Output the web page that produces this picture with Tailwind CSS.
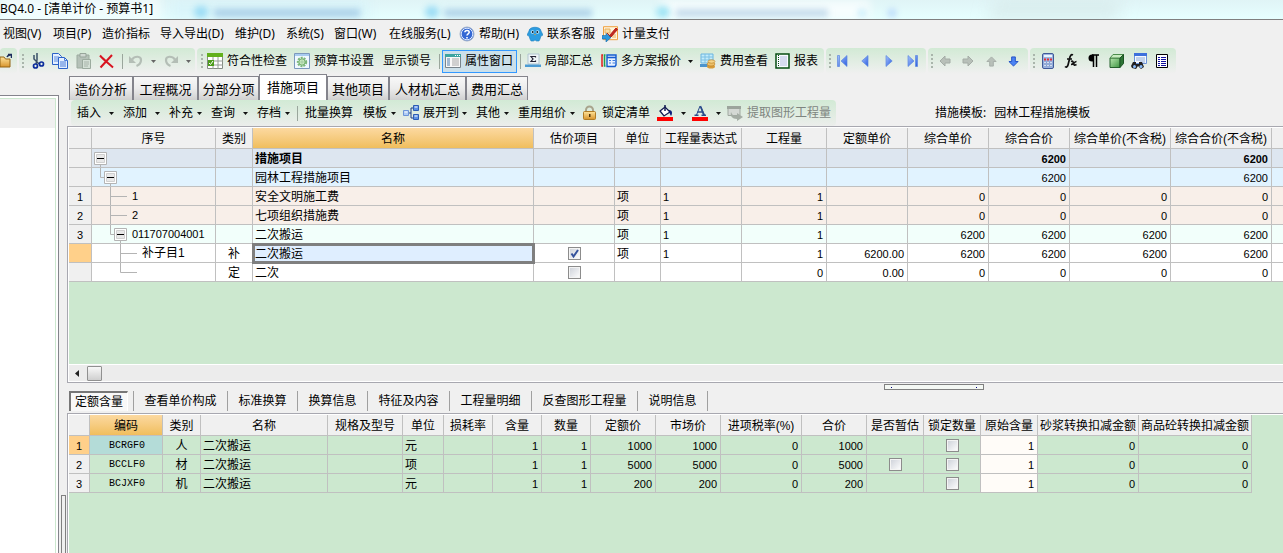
<!DOCTYPE html>
<html lang="zh-CN">
<head>
<meta charset="utf-8">
<meta name="viewport" content="width=device-width, initial-scale=1">
<title>BQ4.0 - [清单计价 - 预算书1]</title>
<script src="https://cdn.jsdelivr.net/npm/@tailwindcss/browser@4"></script>
</head>
<body class="flex min-h-screen flex-col overflow-hidden bg-[#f0f0f0] font-['Noto_Sans','Noto_Sans_CJK_SC',sans-serif] text-[12px] leading-4 text-black">

<!-- reusable symbols -->
<svg class="absolute size-0" aria-hidden="true">
  <symbol id="caret" viewBox="0 0 5 3"><path d="M0 0h5L2.500 3z" fill="#111"/></symbol>
  <symbol id="caret-dim" viewBox="0 0 5 3"><path d="M0 0h5L2.500 3z" fill="#666"/></symbol>
  <symbol id="minus" viewBox="0 0 13 13"><path d="M.5.5h12v12H.5z" fill="#fff" stroke="#b4b4b4"/><path d="M2.500 2.500h8v8h-8z" fill="#e8e8e8" stroke="#d0d0d0"/><path d="M3 6h7v1H3z" fill="#000"/></symbol>
  <symbol id="grip" viewBox="0 0 3 15"><path d="M0 0h2v2H0zM0 4h2v2H0zM0 8h2v2H0zM0 12h2v2H0z" fill="#a9b5ab"/></symbol>
  <symbol id="arrow" viewBox="0 0 12 12"><path d="M1 6 6 1v3h5v4H6v3z" stroke-linejoin="round"/></symbol>
  <linearGradient id="blue" x1="0" x2="1" y1="0" y2="1"><stop stop-color="#a8c4fc"/><stop offset="1" stop-color="#2a5ce0"/></linearGradient>
  <linearGradient id="gold" x1="0" x2="0" y1="0" y2="1"><stop stop-color="#ffe49a"/><stop offset="1" stop-color="#d8942c"/></linearGradient>
  <linearGradient id="cube" x1="0" x2="1" y1="0" y2="1"><stop stop-color="#b9e8b0"/><stop offset="1" stop-color="#3c9440"/></linearGradient>
</svg>

<header class="relative h-5 overflow-hidden border-b border-[#7f7f7f] bg-linear-to-b from-[#e0f4f6] to-[#e6ffff]">
  <div class="absolute inset-0" aria-hidden="true">
    <div class="absolute top-0 left-[170px] h-5 w-[200px] bg-[#d4f2fa]/60 blur-[6px]"></div>
    <div class="absolute top-0 left-[660px] h-5 w-[210px] bg-white/70 blur-[4px]"></div>
    <div class="absolute top-0 left-[990px] h-5 w-[130px] -skew-x-12 bg-[#d6e8e8]/70 blur-[8px]"></div>
    <div class="absolute top-[6px] left-[194px] h-3 w-3.5 rounded-full bg-[#9cdcf4] blur-[3px]"></div>
    <div class="absolute top-[9px] left-[214px] h-2 w-[146px] bg-[#8cb8dc]/60 blur-[3px]"></div>
    <div class="absolute top-[6px] left-[425px] h-3 w-3.5 rounded-full bg-[#9cdcf4] blur-[3px]"></div>
    <div class="absolute top-[9px] left-[444px] h-2 w-[148px] bg-[#8cb8dc]/60 blur-[3px]"></div>
    <div class="absolute top-[6px] left-[656px] h-3 w-3.5 rounded-full bg-[#a0e4f4] blur-[3px]"></div>
    <div class="absolute top-[9px] left-[676px] h-2 w-[152px] bg-[#94bcdc]/50 blur-[3px]"></div>
    <div class="absolute top-[9px] left-[858px] size-2 rounded-full bg-[#c4ecfa] blur-[3px]"></div>
    <div class="absolute top-[9px] left-[888px] size-2 rounded-full bg-[#b4d4fa] blur-[3px]"></div>
    <div class="absolute -top-1 left-0 h-6 w-[160px] bg-white/50 blur-[4px]"></div>
  </div>
  <h1 class="relative truncate leading-[18px]">BQ4.0 - [清单计价 - 预算书1]</h1>
</header>

<nav class="flex h-7 items-center pl-[3px] whitespace-nowrap [&>button]:flex [&>button]:shrink-0 [&>button]:items-center [&>button]:gap-1">
  <button class="w-[50px]">视图(V)</button>
  <button class="w-[49px]">项目(P)</button>
  <button class="w-[58px]">造价指标</button>
  <button class="w-[75px]">导入导出(D)</button>
  <button class="w-[51px]">维护(D)</button>
  <button class="w-[48px]">系统(S)</button>
  <button class="w-[55px]">窗口(W)</button>
  <button class="w-[70px]">在线服务(L)</button>
  <button class="w-[68px]"><svg class="size-4 shrink-0" viewBox="0 0 16 16"><circle cx="8" cy="8" r="7" fill="#3468d4" stroke="#a0b0c8"/><circle cx="8" cy="8" r="5.800" fill="none" stroke="#dce8ff"/><path d="M5.900 6.300C6 3.800 10.300 3.900 10.200 6.300 10.100 7.900 8 7.800 8 9.600M8 11v1.400" fill="none" stroke="#fff" stroke-width="1.600"/></svg>帮助(H)</button>
  <button class="w-[75px]"><svg class="size-4 shrink-0" viewBox="0 0 16 16"><path d="M2 5C2 0 14 0 14 5l2 4-2 1-1 3-1 2H9.500L8 14l-1.500 1H4l-1-2-1-3-2-1z" fill="#2c9ce0" stroke="#1c80c0" stroke-width=".6"/><circle cx="5.500" cy="6" r="1.800" fill="#c4ecff"/><circle cx="10.500" cy="6" r="1.800" fill="#c4ecff"/><circle cx="5.700" cy="6" r="1" fill="#123"/><circle cx="10.300" cy="6" r="1" fill="#123"/><path d="m7 8 1 1.500L9 8z" fill="#e8a030"/></svg>联系客服</button>
  <button><svg class="size-4 shrink-0" viewBox="0 0 16 16"><path d="M1.500.7h14v13h-14z" fill="#fff4dc" stroke="#f0a040"/><path d="M3 3h5v4H3zM10 9h4M10 11h4" fill="#f9dfa8" stroke="#e8b060"/><path d="m7 10 7-8 1.500 1.500L9 11l-3 1zM5 7l3 3" fill="#c02820" stroke="#b82018"/><path d="M0 9.500h4v-2L9 11.500 4 16v-3H0z" fill="#2c98dc" stroke="#1468a8" stroke-width=".6"/></svg>计量支付</button>
</nav>

<div class="flex h-[26px] gap-0.5 overflow-hidden whitespace-nowrap [&>div]:flex [&>div]:shrink-0 [&>div]:items-center [&>div]:rounded-sm [&>div]:bg-linear-to-b [&>div]:from-[#d2ead5] [&>div]:to-[#f0f0f0] [&_button]:flex [&_button]:shrink-0 [&_button]:items-center [&_button]:gap-1 [&_svg]:shrink-0" role="toolbar" aria-label="主工具栏">
  <div class="w-[17px]">
    <button aria-label="打开"><svg class="h-4 w-3" viewBox="0 0 12 16"><path d="M0 4h4l1.500 2H10v8H0z" fill="url(#gold)" stroke="#946414"/><path d="M7 4c1-2 2-2.500 4-2M8 1.500h3.500V5" fill="none" stroke="#1c2c5c" stroke-width="1.500"/></svg></button>
  </div>
  <div class="w-[176px] pl-[3px]">
    <svg class="mr-[5px] h-[15px] w-[3px]"><use href="#grip"/></svg>
    <button class="w-[22px]" aria-label="剪切"><svg class="size-4" viewBox="0 0 16 16"><path d="M4 2v4l5 5M7 0v7l-1 4" fill="none" stroke="#3a5068" stroke-width="1.500"/><circle cx="5.500" cy="13" r="2" fill="none" stroke="#0c2c9c" stroke-width="1.700"/><circle cx="11.500" cy="11" r="2" fill="none" stroke="#0c2c9c" stroke-width="1.700"/></svg></button>
    <button class="w-[24px]" aria-label="复制"><svg class="size-4" viewBox="0 0 16 16"><path d="M.5.5h6l3 3v8h-9z" fill="#e4efff" stroke="#2c62c8"/><path d="M2 4h5M2 6h5M2 8h5" stroke="#5c8ce0"/><path d="M6.500 4.500h6l3 3v8h-9z" fill="#e4efff" stroke="#2c62c8"/><path d="M8 9h6M8 11h6M8 13h6M12.500 4.500v3h3" fill="none" stroke="#4a7cd8"/></svg></button>
    <button class="w-[23px]" aria-label="粘贴"><svg class="size-4" viewBox="0 0 16 16"><path d="M1 2h12v13H1z" fill="#b5c1b8" stroke="#9cab9f"/><path d="M4 .5h6V4H4z" fill="#d0d8d2" stroke="#97a59a"/><path d="M6.500 6.500h8v9h-8z" fill="#d4e0d6" stroke="#9cab9f"/><path d="M8 9h5M8 11h5M8 13h4" stroke="#a8b4aa"/></svg></button>
    <button class="w-[23px]" aria-label="删除"><svg class="h-4 w-[15px]" viewBox="0 0 15 16"><path d="M1 2.500C5 7 9 10 14 14.500M13 2 1.500 14.500" fill="none" stroke="#d81420" stroke-width="2"/></svg></button>
    <span class="mr-1.5 h-[15px] w-px bg-[#9aa69c]"></span>
    <button class="w-[35px]" aria-label="撤销"><svg class="mr-1 h-4 w-[14px]" viewBox="0 0 14 16"><path d="M3 6.500C6 2.500 12 3 12 7c0 3-2 5-4.500 6" fill="none" stroke="#b4beb6" stroke-width="2.200"/><path d="M0 3v7h7z" fill="#b4beb6"/></svg><svg class="h-[3px] w-[5px]"><use href="#caret-dim"/></svg></button>
    <button aria-label="重做"><svg class="mr-1 h-4 w-[14px]" viewBox="0 0 14 16"><path d="M11 6.500C8 2.500 2 3 2 7c0 3 2 5 4.500 6" fill="none" stroke="#b4beb6" stroke-width="2.200"/><path d="M14 3v7H7z" fill="#b4beb6"/></svg><svg class="h-[3px] w-[5px]"><use href="#caret-dim"/></svg></button>
  </div>
  <div class="w-[627px] pl-1">
    <svg class="mr-[3px] h-[15px] w-[3px]"><use href="#grip"/></svg>
    <button class="w-[87px]"><svg class="size-4" viewBox="0 0 16 16"><path d="M.5.5h15v15H.5z" fill="#fff" stroke="#848c84"/><path d="M0 0h16v4H0z" fill="#62b01c"/><path d="M6 4v12M11 4v12M1 8h15M1 12h15" stroke="#949c94"/><path d="M1 7h6v6H1z" fill="#4c9c1c"/><path d="m2 10 1.500 1.500L6 8" fill="none" stroke="#fff"/></svg>符合性检查</button>
    <button class="w-[89px]"><svg class="size-4" viewBox="0 0 16 16"><path d="M.5.5h15v15H.5z" fill="#f0f8ff" stroke="#7c98bc"/><path d="M1 1h14v2H1z" fill="#a8ccf0"/><circle cx="8" cy="9" r="4.200" fill="none" stroke="#7cb878" stroke-width="2" stroke-dasharray="2 1"/><circle cx="8" cy="9" r="3.200" fill="#c8e8c0" stroke="#6cac68"/><circle cx="8" cy="9" r="1" fill="#fff" stroke="#6cac68" stroke-width=".6"/></svg>预算书设置</button>
    <button class="w-[56px]">显示锁号</button>
    <span class="mr-0.5 h-[15px] w-px bg-[#9aa69c]"></span>
    <button class="mr-[3px] h-[23px] w-[75px] border border-[#3399ff] bg-[#cce0ea] pl-0.5" aria-pressed="true"><svg class="size-4" viewBox="0 0 16 16"><path d="M.5 1.500h15v13H.5z" fill="#f8f8f8" stroke="#78848c"/><path d="M0 1h16v3H0z" fill="#3ca4a0"/><path d="M10 2h1v1h-1zM12 2h1v1h-1zM14 2h1v1h-1z" fill="#fff"/><path d="M2 6h3M2 8h3M2 10h3M2 12h3" stroke="#4c7cac"/><path d="M7 6h7M7 8h7M7 10h7M7 12h7" stroke="#a8a8a8"/></svg>属性窗口</button>
    <span class="mr-1 h-[15px] w-px bg-[#9aa69c]"></span>
    <button class="w-[76px]"><svg class="size-4" viewBox="0 0 16 16"><path d="M3 1h11v10H3z" fill="#eef4f6" stroke="#b0c4d0"/><path d="M10.500 4.500V3.500H6L8 6 6 8.500h4.500V7.500" fill="none" stroke="#223" stroke-width="1.200"/><path d="M0 11.500h16V14H0z" fill="#4c9cd4"/></svg>局部汇总</button>
    <button class="w-[99px]"><svg class="size-4" viewBox="0 0 16 16"><path d="M2 2H1v11h1" fill="none" stroke="#e02020" stroke-width="1.500"/><path d="M4.500 2H3.500v11h1" fill="none" stroke="#20a050" stroke-width="1.500"/><path d="M6 2h9v10l-1 1.500H6z" fill="#e8f2ff" stroke="#145cd0" stroke-width="1.400"/><path d="M6 4.500h9" stroke="#145cd0" stroke-width="1.600"/><path d="M8 7.500h2M11.500 7.500H14M8 10h2M11.500 10H14" stroke="#3c7ce0"/></svg>多方案报价<svg class="ml-[3px] h-[3px] w-[5px]"><use href="#caret"/></svg></button>
    <button class="w-[75px]"><svg class="size-4" viewBox="0 0 16 16"><path d="M1 1h12v9H1z" fill="#c4ecfa" stroke="#68b4e0"/><path d="M1 4h12M1 7h12M5 1v9M9 1v9" stroke="#7cc0e4"/><path d="M0 11h9v3H0z" fill="#4c94cc"/><ellipse cx="11" cy="13.500" rx="4" ry="2" fill="#d89c38"/><ellipse cx="11" cy="11" rx="4" ry="2" fill="#ecc068" stroke="#b87c20" stroke-width=".6"/><ellipse cx="11.500" cy="8.500" rx="3.500" ry="1.700" fill="#f4d488" stroke="#b87c20" stroke-width=".6"/></svg>费用查看</button>
    <button><svg class="h-4 w-[15px]" viewBox="0 0 15 16"><path d="M1 1h13v14H1z" fill="#f8fbff" stroke="#064d12" stroke-width="1.500"/><path d="M3.500 2v12" stroke="#064d12" stroke-dasharray="1 1"/><path d="M5 4h7M5 6h7M5 8h7M5 10h7M5 12h7" stroke="#b4bce0"/></svg>报表</button>
  </div>
  <div class="w-[100px] pl-[3px]">
    <svg class="mr-[5px] h-[15px] w-[3px]"><use href="#grip"/></svg>
    <button class="w-[24px]" aria-label="首条"><svg class="h-3 w-[11px]" viewBox="0 0 11 12"><path d="M.5.5h2v11h-2zM10 .5v11L4 6z" fill="url(#blue)" stroke="#5c88e0" stroke-width=".7"/></svg></button>
    <button class="w-[24px]" aria-label="上一条"><svg class="h-3 w-2" viewBox="0 0 8 12"><path d="M7 .5v11L.8 6z" fill="url(#blue)" stroke="#5c88e0" stroke-width=".7"/></svg></button>
    <button class="w-[22px]" aria-label="下一条"><svg class="h-3 w-2" viewBox="0 0 8 12"><path d="M1 .5v11L7.200 6z" fill="url(#blue)" stroke="#5c88e0" stroke-width=".7"/></svg></button>
    <button aria-label="末条"><svg class="h-3 w-[11px]" viewBox="0 0 11 12"><path d="M8.500.5h2v11h-2zM1 .5v11L7 6z" fill="url(#blue)" stroke="#5c88e0" stroke-width=".7"/></svg></button>
  </div>
  <div class="w-[100px] pl-[3px]">
    <svg class="mr-[5px] h-[15px] w-[3px]"><use href="#grip"/></svg>
    <button class="w-[23px]" aria-label="左移"><svg class="size-3" fill="#b8c0b9" stroke="#a4aca6"><use href="#arrow"/></svg></button>
    <button class="w-[24px]" aria-label="右移"><svg class="size-3 rotate-180" fill="#b8c0b9" stroke="#a4aca6"><use href="#arrow"/></svg></button>
    <button class="w-[22px]" aria-label="上移"><svg class="size-[11px] rotate-90" fill="#b8c0b9" stroke="#a4aca6"><use href="#arrow"/></svg></button>
    <button aria-label="下移"><svg class="size-[11px] -rotate-90" fill="#4c84f4" stroke="#1c4cc4"><use href="#arrow"/></svg></button>
  </div>
  <div class="w-[146px] pl-[3px]">
    <svg class="mr-1.5 h-[15px] w-[3px]"><use href="#grip"/></svg>
    <button class="w-[22px]" aria-label="计算器"><svg class="h-4 w-3" viewBox="0 0 12 16"><rect x=".5" y=".5" width="11" height="15" rx="1.500" fill="#9cb4e0" stroke="#405a98"/><path d="M2 2h8v2H2z" fill="#e8f4ff"/><path d="M2 5.500h2v2H2zM5 5.500h2v2H5zM8 5.500h2v2H8z" fill="#e03038"/><path d="M2 8.500h2v2H2zM5 8.500h2v2H5zM8 8.500h2v2H8zM2 11.500h2v2H2zM5 11.500h2v2H5zM8 11.500h2v2H8z" fill="#f4f8ff" stroke="#5878b8" stroke-width=".4"/></svg></button>
    <button class="w-[24px]" aria-label="函数"><svg class="h-4 w-[14px]" viewBox="0 0 14 16"><path d="M9 2C7 1 6 3 5.500 6L4 12c-.5 2-2 2.500-3 1.500M3 6h5M7 8.500c2-1 2 0 2.500 2s1 2 3 1M12.500 8.500c-2 0-3 3-5.500 3" fill="none" stroke="#111" stroke-width="1.700"/></svg></button>
    <button class="w-[21px]" aria-label="段落标记"><svg class="h-4 w-[11px]" viewBox="0 0 11 16"><path d="M5.500 2v12M8.500 2v12M4 2h7" fill="none" stroke="#000" stroke-width="1.500"/><path d="M5.500 1.500H4a3.500 3.500 0 0 0 0 7h1.500z"/></svg></button>
    <button class="w-[22px]" aria-label="图形"><svg class="h-4 w-[15px]" viewBox="0 0 15 16"><path d="M1 5h10v9.500H1z" fill="url(#cube)" stroke="#24602c"/><path d="m1 5 3-3.500h10.500L11 5z" fill="#c8ecc0" stroke="#4c8c4c"/><path d="m11 5 3.500-3.500v9L11 14.500z" fill="#2c7434" stroke="#1c5424"/></svg></button>
    <button class="w-[25px]" aria-label="查找"><svg class="size-4" viewBox="0 0 16 16"><path d="M3.500.5h12v10h-12z" fill="#f4f8ff" stroke="#6c94d8"/><path d="M3 0h13v3H3z" fill="#3c70dc"/><path d="M5 5h9M5 7h9M9 9h5" stroke="#8cacd8"/><path d="M2 9h3v2h3V9h3l2 5-3 2-3-3-2 3-4-1-1-2z" fill="#222"/><circle cx="3.500" cy="13.500" r="1.500" fill="#8cc0ff"/><circle cx="10" cy="13.500" r="1.500" fill="#8cc0ff"/></svg></button>
    <button aria-label="列表"><svg class="h-[14px] w-3" viewBox="0 0 12 14"><path d="M.5.5h11v13H.5z" fill="#fff" stroke="#000"/><path d="M2 3.500h2M5 3.500h5M2 5.500h2M5 5.500h5M2 7.500h2M5 7.500h5M2 9.500h2M5 9.500h5M2 11.500h2M5 11.500h5" stroke="#10109c"/></svg></button>
  </div>
</div>

<main class="flex flex-1">
  <aside class="relative mt-[21px] w-[59px] shrink-0 border-t border-r border-[#84848c] bg-white pt-0.5 pr-0.5">
    <div class="flex h-full flex-col border-t border-r border-[#cce8cf]">
      <div class="h-[29px] bg-[#f0f0f0]"></div>
    </div>
    <div class="absolute right-[-8px] bottom-0 h-[58px] w-[5px] border border-b-0 border-[#808080] bg-[#f0f0f0]"></div>
  </aside>

  <div class="ml-2 flex min-w-0 flex-1 flex-col">
    <div class="flex h-[26px] items-end overflow-hidden pl-0.5 text-[13px] whitespace-nowrap [&>button]:h-6 [&>button]:shrink-0 [&>button]:border [&>button]:border-b-0 [&>button]:border-[#84848c]" role="tablist">
      <button role="tab" class="w-16 bg-linear-to-b from-[#f8f8f8] via-[#ececec] to-[#d0d0d0]">造价分析</button>
      <button role="tab" class="w-[65px] bg-linear-to-b from-[#f8f8f8] via-[#ececec] to-[#d0d0d0]">工程概况</button>
      <button role="tab" class="w-[61px] bg-linear-to-b from-[#f8f8f8] via-[#ececec] to-[#d0d0d0]">分部分项</button>
      <button role="tab" aria-selected="true" class="h-auto! w-[68px] self-stretch bg-white pb-0.5">措施项目</button>
      <button role="tab" class="w-[62px] bg-linear-to-b from-[#f8f8f8] via-[#ececec] to-[#d0d0d0]">其他项目</button>
      <button role="tab" class="w-[77px] bg-linear-to-b from-[#f8f8f8] via-[#ececec] to-[#d0d0d0]">人材机汇总</button>
      <button role="tab" class="w-[62px] bg-linear-to-b from-[#f8f8f8] via-[#ececec] to-[#d0d0d0]">费用汇总</button>
    </div>

    <div class="flex h-[26px] items-center overflow-hidden pl-1 whitespace-nowrap">
      <div class="flex h-full w-[765px] shrink-0 items-center rounded-sm bg-linear-to-b from-[#d2ead5] to-[#eceeec] pl-1.5 [&_button]:flex [&_button]:shrink-0 [&_button]:items-center [&_button]:gap-1 [&_svg]:shrink-0" role="toolbar" aria-label="措施工具栏">
        <button class="w-[46px]">插入<svg class="ml-1 h-[3px] w-[5px]"><use href="#caret"/></svg></button>
        <button class="w-[46px]">添加<svg class="ml-1 h-[3px] w-[5px]"><use href="#caret"/></svg></button>
        <button class="w-[42px]">补充<svg class="h-[3px] w-[5px]"><use href="#caret"/></svg></button>
        <button class="w-[46px]">查询<svg class="ml-1 h-[3px] w-[5px]"><use href="#caret"/></svg></button>
        <button class="w-[40px]">存档<svg class="h-[3px] w-[5px]"><use href="#caret"/></svg></button>
        <span class="mr-[7px] h-[15px] w-px bg-[#9aa69c]"></span>
        <button class="w-[58px]">批量换算</button>
        <button class="w-[40px]">模板<svg class="h-[3px] w-[5px]"><use href="#caret"/></svg></button>
        <button class="w-[73px]"><svg class="size-4" viewBox="0 0 16 16"><path d="M5 8h3M11 3H8v10h3" fill="none" stroke="#1c3c84"/><path d="M.5 5.500h5v5h-5z" fill="#b0ccf4" stroke="#6c94d8"/><path d="M10.500.5h5v5h-5zM10.500 9.500h5v5h-5z" fill="#5c90e4" stroke="#2c5cb4"/><path d="M11.500 2h3M11.500 11h3M1.500 7h3" stroke="#fff"/></svg>展开到<svg class="-ml-px h-[3px] w-[5px]"><use href="#caret"/></svg></button>
        <button class="w-[42px]">其他<svg class="h-[3px] w-[5px]"><use href="#caret"/></svg></button>
        <button class="w-[64px]">重用组价<svg class="h-[3px] w-[5px]"><use href="#caret"/></svg></button>
        <button class="w-[75px]"><svg class="h-4 w-4" viewBox="0 0 16 16"><path d="M4 8V5a3.500 3.500 0 0 1 7 0v3" fill="none" stroke="#a8a48c" stroke-width="2"/><rect x="1.500" y="6.500" width="12" height="8" rx="1" fill="url(#gold)" stroke="#b07c24"/><path d="M7 9h1.500v3H7z" fill="#503408"/></svg>锁定清单</button>
        <button class="w-[35px]" aria-label="填充颜色"><svg class="mr-1 size-4" viewBox="0 0 16 16"><path d="m3 6 5-4 5 5-6 4z" fill="#fff" stroke="#111b50" stroke-width="1.300"/><path d="M8 0v6" stroke="#111b50" stroke-width="1.500"/><path d="M12 5c3 0 4 3 2 6-1-1-1-3-2-4z" fill="#0c1c7c"/><path d="M0 12h16v4H0z" fill="#f00"/></svg><svg class="h-[3px] w-[5px]"><use href="#caret"/></svg></button>
        <button class="w-[35px]" aria-label="字体颜色"><svg class="mr-1 size-4" viewBox="0 0 16 16"><path d="m8.500 1 3.500 9M5.500 7h5M2.500 10.300h4M9.500 10.300h4.500" fill="none" stroke="#2c4c8c" stroke-width="1.400"/><path d="m8 1-3.500 9" stroke="#2c4c8c"/><path d="M8 2h1.500l3.500 8h-2z" fill="#2c4c8c"/><path d="M0 12h16v4H0z" fill="#f00"/></svg><svg class="h-[3px] w-[5px]"><use href="#caret"/></svg></button>
        <button class="text-[#7e857f]"><svg class="size-4" viewBox="0 0 16 16"><path d="M1 1.500h12v9H1z" fill="#d4d8d4" stroke="#a0a8a0"/><path d="M0 1h14v3H0z" fill="#9ca49c"/><path d="M4 7c1 3 3 4 6 4V8l6 4-6 4v-2c-5 0-7-3-6-7z" fill="#a4aca4"/></svg>提取图形工程量</button>
      </div>
      <p class="ml-[99px] flex gap-2"><span>措施模板:</span><span>园林工程措施模板</span></p>
    </div>

    <section class="flex flex-1 flex-col overflow-hidden border border-r-0 border-[#a8a8b0] bg-white pt-px pl-px" aria-label="措施项目">
      <div class="flex-1 bg-[#cce8cf]">
        <table class="w-full table-fixed border-separate border-spacing-0 overflow-hidden font-['Liberation_Sans','Noto_Sans_CJK_SC',sans-serif] text-[12px] leading-4 whitespace-nowrap [&_.n]:pr-[3px] [&_.n]:text-right [&_.n]:text-[11px] [&_.s]:text-[11px] [&_tbody_th]:bg-[#f0f0f0] [&_tbody_th]:text-[11px] [&_td]:border-r [&_td]:border-b [&_td]:border-[#c0c0c0] [&_td]:px-0.5 [&_td]:pt-px [&_td]:pb-0 [&_td:last-child]:border-r-0 [&_th]:border-r [&_th]:border-b [&_th]:border-[#c0c0c0] [&_th]:px-0 [&_th]:pt-px [&_th]:pb-0 [&_th]:font-normal [&_th:last-child:not(:first-child)]:border-r-0 [&_tr]:h-[19px]">
          <colgroup><col class="w-[23px]"><col class="w-[124px]"><col class="w-[37px]"><col class="w-[281px]"><col class="w-[81px]"><col class="w-[46px]"><col class="w-[81px]"><col class="w-[85px]"><col class="w-[81px]"><col class="w-[81px]"><col class="w-[81px]"><col class="w-[101px]"><col class="w-[101px]"><col></colgroup>
          <thead class="bg-[#f0f0f0]"><tr class="h-[21px]!"><th></th><th>序号</th><th>类别</th><th class="bg-linear-to-b from-[#fcd9a0] to-[#f0be5c]">名称</th><th>估价项目</th><th>单位</th><th>工程量表达式</th><th>工程量</th><th>定额单价</th><th>综合单价</th><th>综合合价</th><th>综合单价(不含税)</th><th>综合合价(不含税)</th><th></th></tr></thead>
          <tbody>
            <tr class="bg-[#dde6f0] font-bold"><th></th><td class="p-0!"><svg class="block h-[18px] w-[26px]"><use href="#minus" x="2" y="3" width="13" height="13"/><path d="M8.500 16v2" stroke="#b4b4b4"/></svg></td><td></td><td>措施项目</td><td></td><td></td><td></td><td></td><td></td><td></td><td class="n">6200</td><td></td><td class="n">6200</td><td></td></tr>
            <tr class="bg-[#e1f3ff]"><th></th><td class="p-0!"><svg class="block h-[18px] w-[36px]"><path d="M8.500 0v9.500H12M18.500 16v2" fill="none" stroke="#b4b4b4"/><use href="#minus" x="12" y="3" width="13" height="13"/></svg></td><td></td><td>园林工程措施项目</td><td></td><td></td><td></td><td></td><td></td><td></td><td class="n">6200</td><td></td><td class="n">6200</td><td></td></tr>
            <tr class="bg-[#f8efe9]"><th>1</th><td class="p-0!"><div class="flex items-center text-[11px]"><svg class="h-[18px] w-10"><path d="M18.500 0v18M18.500 9.500H35" fill="none" stroke="#b4b4b4"/></svg>1</div></td><td></td><td>安全文明施工费</td><td></td><td>项</td><td class="s">1</td><td class="n">1</td><td></td><td class="n">0</td><td class="n">0</td><td class="n">0</td><td class="n">0</td><td></td></tr>
            <tr class="bg-[#f8efe9]"><th>2</th><td class="p-0!"><div class="flex items-center text-[11px]"><svg class="h-[18px] w-10"><path d="M18.500 0v18M18.500 9.500H35" fill="none" stroke="#b4b4b4"/></svg>2</div></td><td></td><td>七项组织措施费</td><td></td><td>项</td><td class="s">1</td><td class="n">1</td><td></td><td class="n">0</td><td class="n">0</td><td class="n">0</td><td class="n">0</td><td></td></tr>
            <tr class="bg-[#f2fffb]"><th>3</th><td class="p-0!"><div class="flex items-center text-[11px]"><svg class="h-[18px] w-10"><path d="M18.500 0v9.500H22M28.500 16v2" fill="none" stroke="#b4b4b4"/><use href="#minus" x="22" y="3" width="13" height="13"/></svg>011707004001</div></td><td></td><td>二次搬运</td><td></td><td>项</td><td class="s">1</td><td class="n">1</td><td></td><td class="n">6200</td><td class="n">6200</td><td class="n">6200</td><td class="n">6200</td><td></td></tr>
            <tr class="bg-white"><th class="bg-[#ffd08a]!"></th><td class="p-0!"><div class="flex items-center"><svg class="h-[18px] w-[50px]"><path d="M28.500 0v18M28.500 9.500H45" fill="none" stroke="#b4b4b4"/></svg>补子目1</div></td><td class="text-center">补</td><td class="bg-[#dfeeff] outline-3 -outline-offset-2 outline-[#7f7f7f]">二次搬运</td><td class="text-center"><label class="relative mx-auto block size-[13px]"><input type="checkbox" checked aria-label="估价项目 二次搬运" class="peer block size-[13px] appearance-none border border-[#8c8c8c] bg-linear-to-br from-[#ccd0d8] to-white shadow-[inset_0_0_0_1px_#f4f4f4]"><svg class="absolute inset-0 hidden size-[13px] peer-checked:block" viewBox="0 0 13 13"><path d="m3.500 6.500 2 3L10 3" fill="none" stroke="#35529c" stroke-width="2"/></svg></label></td><td>项</td><td class="s">1</td><td class="n">1</td><td class="n">6200.00</td><td class="n">6200</td><td class="n">6200</td><td class="n">6200</td><td class="n">6200</td><td></td></tr>
            <tr class="bg-white"><th></th><td class="p-0!"><svg class="block h-[18px] w-[50px]"><path d="M28.500 0v9.500H45" fill="none" stroke="#b4b4b4"/></svg></td><td class="text-center">定</td><td>二次</td><td><input type="checkbox" aria-label="估价项目 二次" class="mx-auto block size-[13px] appearance-none border border-[#8c8c8c] bg-linear-to-br from-[#ccd0d8] to-white shadow-[inset_0_0_0_1px_#f4f4f4]"></td><td></td><td></td><td class="n">0</td><td class="n">0.00</td><td class="n">0</td><td class="n">0</td><td class="n">0</td><td class="n">0</td><td></td></tr>
          </tbody>
        </table>
      </div>
      <div class="flex h-[18px] items-center border-y border-white bg-[#ececec] pl-1">
        <button aria-label="向左滚动" class="w-[14px]"><svg class="ml-0.5 h-[7px] w-1" viewBox="0 0 4 7"><path d="M4 0v7L0 3.500z" fill="#222"/></svg></button>
        <div class="size-[15px] rounded-[1px] border border-[#909090] bg-linear-to-b from-[#f8f8f8] to-[#cfcfcf]"></div>
      </div>
    </section>

    <div class="relative flex h-[30px] items-start overflow-hidden pt-2 pl-0.5 whitespace-nowrap [&>button]:h-5 [&>button]:shrink-0 [&>button]:border-r [&>button]:border-[#a0a0a0]" role="tablist">
      <div class="absolute top-px left-[817px] flex h-1.5 w-[100px] items-center justify-between border border-[#808080] bg-[#f4f8f4] px-1.5"><i class="size-px bg-[#000080]"></i><i class="size-px bg-[#000080]"></i></div>
      <button role="tab" aria-selected="true" class="mr-[5px] w-[59px] border-t-2 border-l-2 border-t-[#777]! border-r-white! border-l-[#777]! bg-[#f8f8f8]">定额含量</button>
      <button role="tab" class="w-[95px] border-l">查看单价构成</button>
      <button role="tab" class="w-[70px]">标准换算</button>
      <button role="tab" class="w-[70px]">换算信息</button>
      <button role="tab" class="w-[82px]">特征及内容</button>
      <button role="tab" class="w-[82px]">工程量明细</button>
      <button role="tab" class="w-[106px]">反查图形工程量</button>
      <button role="tab" class="w-[70px]">说明信息</button>
    </div>

    <section class="min-h-[140px] overflow-hidden border-t border-l border-[#a8a8b0] bg-white pt-px pl-px" aria-label="定额含量">
      <div class="min-h-[138px] bg-[#cce8cf]">
        <table class="w-[1183px] table-fixed border-separate border-spacing-0 font-['Liberation_Sans','Noto_Sans_CJK_SC',sans-serif] text-[12px] leading-4 whitespace-nowrap [&_.c]:text-center [&_.n]:pr-[3px] [&_.n]:text-right [&_.n]:text-[11px] [&_input]:mx-auto [&_input]:block [&_input]:size-[13px] [&_input]:appearance-none [&_input]:border [&_input]:border-[#8c8c8c] [&_input]:bg-linear-to-br [&_input]:from-[#ccd0d8] [&_input]:to-white [&_input]:shadow-[inset_0_0_0_1px_#f4f4f4] [&_tbody_th]:bg-[#f0f0f0] [&_tbody_th]:text-[11px] [&_td]:border-r [&_td]:border-b [&_td]:border-[#c0c0c0] [&_td]:px-0.5 [&_td]:pt-px [&_td]:pb-0 [&_th]:border-r [&_th]:border-b [&_th]:border-[#c0c0c0] [&_th]:px-0 [&_th]:pt-px [&_th]:pb-0 [&_th]:font-normal [&_tr]:h-[19px]">
          <colgroup><col class="w-[21px]"><col class="w-[73px]"><col class="w-[38px]"><col class="w-[127px]"><col class="w-[75px]"><col class="w-[41px]"><col class="w-[49px]"><col class="w-[49px]"><col class="w-[49px]"><col class="w-[65px]"><col class="w-[65px]"><col class="w-[81px]"><col class="w-[65px]"><col class="w-[57px]"><col class="w-[57px]"><col class="w-[57px]"><col class="w-[101px]"><col class="w-[113px]"></colgroup>
          <thead class="bg-[#f0f0f0]"><tr class="h-[21px]!"><th></th><th class="bg-linear-to-b from-[#fcd9a0] to-[#f0be5c]">编码</th><th>类别</th><th>名称</th><th>规格及型号</th><th>单位</th><th>损耗率</th><th>含量</th><th>数量</th><th>定额价</th><th>市场价</th><th>进项税率(%)</th><th>合价</th><th>是否暂估</th><th>锁定数量</th><th>原始含量</th><th>砂浆转换扣减金额</th><th>商品砼转换扣减金额</th></tr></thead>
          <tbody>
            <tr><th class="bg-[#ffd08a]!">1</th><td class="bg-[#b4dcd8] pl-1! text-center font-['Liberation_Mono',monospace] text-[10px]">BCRGF0</td><td class="c">人</td><td>二次搬运</td><td></td><td>元</td><td></td><td class="n">1</td><td class="n">1</td><td class="n">1000</td><td class="n">1000</td><td class="n">0</td><td class="n">1000</td><td></td><td><input type="checkbox" aria-label="锁定数量 1"></td><td class="n bg-[#fffcf8]">1</td><td class="n">0</td><td class="n">0</td></tr>
            <tr><th>2</th><td class="pl-1! text-center font-['Liberation_Mono',monospace] text-[10px]">BCCLF0</td><td class="c">材</td><td>二次搬运</td><td></td><td>项</td><td></td><td class="n">1</td><td class="n">1</td><td class="n">5000</td><td class="n">5000</td><td class="n">0</td><td class="n">5000</td><td><input type="checkbox" aria-label="是否暂估 2"></td><td><input type="checkbox" aria-label="锁定数量 2"></td><td class="n bg-[#fffcf8]">1</td><td class="n">0</td><td class="n">0</td></tr>
            <tr><th>3</th><td class="pl-1! text-center font-['Liberation_Mono',monospace] text-[10px]">BCJXF0</td><td class="c">机</td><td>二次搬运</td><td></td><td>元</td><td></td><td class="n">1</td><td class="n">1</td><td class="n">200</td><td class="n">200</td><td class="n">0</td><td class="n">200</td><td></td><td><input type="checkbox" aria-label="锁定数量 3"></td><td class="n bg-[#fffcf8]">1</td><td class="n">0</td><td class="n">0</td></tr>
          </tbody>
        </table>
      </div>
    </section>
  </div>
</main>
</body>
</html>
